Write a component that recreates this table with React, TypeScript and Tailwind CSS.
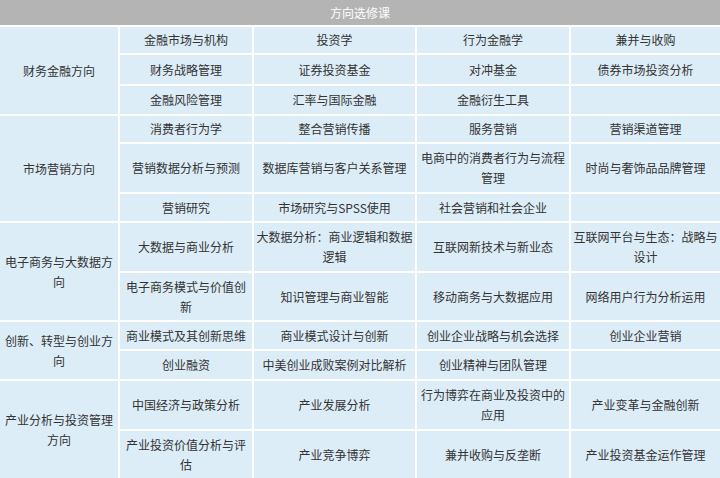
import React from "react";

type Group = { name: string; rowsClass: string; rows: string[][] };

const groups: Group[] = [
  {
    name: "财务金融方向",
    rowsClass: "grid-rows-[26px_29px_28px]",
    rows: [
      ["金融市场与机构", "投资学", "行为金融学", "兼并与收购"],
      ["财务战略管理", "证券投资基金", "对冲基金", "债券市场投资分析"],
      ["金融风险管理", "汇率与国际金融", "金融衍生工具", ""],
    ],
  },
  {
    name: "市场营销方向",
    rowsClass: "grid-rows-[26px_48px_27px]",
    rows: [
      ["消费者行为学", "整合营销传播", "服务营销", "营销渠道管理"],
      ["营销数据分析与预测", "数据库营销与客户关系管理", "电商中的消费者行为与流程管理", "时尚与奢饰品品牌管理"],
      ["营销研究", "市场研究与SPSS使用", "社会营销和社会企业", ""],
    ],
  },
  {
    name: "电子商务与大数据方向",
    rowsClass: "grid-rows-[48px_47px]",
    rows: [
      ["大数据与商业分析", "大数据分析：商业逻辑和数据逻辑", "互联网新技术与新业态", "互联网平台与生态：战略与设计"],
      ["电子商务模式与价值创新", "知识管理与商业智能", "移动商务与大数据应用", "网络用户行为分析运用"],
    ],
  },
  {
    name: "创新、转型与创业方向",
    rowsClass: "grid-rows-[27px_28px]",
    rows: [
      ["商业模式及其创新思维", "商业模式设计与创新", "创业企业战略与机会选择", "创业企业营销"],
      ["创业融资", "中美创业成败案例对比解析", "创业精神与团队管理", ""],
    ],
  },
  {
    name: "产业分析与投资管理方向",
    rowsClass: "grid-rows-[48px_47px]",
    rows: [
      ["中国经济与政策分析", "产业发展分析", "行为博弈在商业及投资中的应用", "产业变革与金融创新"],
      ["产业投资价值分析与评估", "产业竞争博弈", "兼并收购与反垄断", "产业投资基金运作管理"],
    ],
  },
];

const cell =
  "bg-[#ddedf8] flex items-center justify-center text-center px-[2px] text-[12px] leading-[20px] text-[#333333]";

export default function App() {
  return (
    <div className="w-[720px] h-[478px] overflow-hidden bg-white font-['Noto_Sans_CJK_SC','Noto_Sans',sans-serif]">
      <div className="flex flex-col gap-[2px]">
        <div className="h-[25px] bg-[#b4b4b4] flex items-center justify-center text-white text-[12px]">
          方向选修课
        </div>
        {groups.map((g) => (
          <div key={g.name} className="flex gap-[2px]">
            <div className={`${cell} w-[118px] shrink-0`}>{g.name}</div>
            <div
              className={`grid grid-cols-[132px_161px_152px_149px] ${g.rowsClass} gap-[2px] flex-1`}
            >
              {g.rows.flatMap((r, ri) =>
                r.map((t, ci) => (
                  <div key={`${ri}-${ci}`} className={cell}>
                    {t}
                  </div>
                ))
              )}
            </div>
          </div>
        ))}
      </div>
    </div>
  );
}
